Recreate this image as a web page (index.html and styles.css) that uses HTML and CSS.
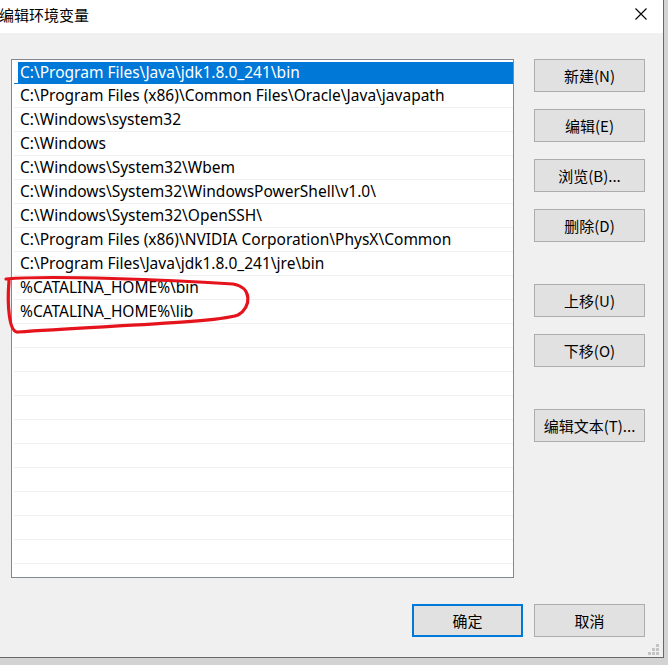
FILE: index.html
```html
<!DOCTYPE html>
<html lang="zh-CN">
<head>
<meta charset="utf-8">
<title>编辑环境变量</title>
<link rel="stylesheet" href="styles.css">
</head>
<body>
<div class="dialog">
  <div class="titlebar">
    <span class="title">编辑环境变量</span>
    <span class="close">
      <svg width="12" height="12" viewBox="0 0 12 12"><path d="M0.5 0.5 L11.5 11.5 M11.5 0.5 L0.5 11.5" stroke="#000" stroke-width="1.1" fill="none"/></svg>
    </span>
  </div>
  <div class="body">
    <div class="main">
      <div class="list">
        <div class="row selected"><div class="cell">C:\Program Files\Java\jdk1.8.0_241\bin</div></div>
        <div class="row"><div class="cell">C:\Program Files (x86)\Common Files\Oracle\Java\javapath</div></div>
        <div class="row"><div class="cell">C:\Windows\system32</div></div>
        <div class="row"><div class="cell">C:\Windows</div></div>
        <div class="row"><div class="cell">C:\Windows\System32\Wbem</div></div>
        <div class="row"><div class="cell">C:\Windows\System32\WindowsPowerShell\v1.0\</div></div>
        <div class="row"><div class="cell">C:\Windows\System32\OpenSSH\</div></div>
        <div class="row"><div class="cell">C:\Program Files (x86)\NVIDIA Corporation\PhysX\Common</div></div>
        <div class="row"><div class="cell">C:\Program Files\Java\jdk1.8.0_241\jre\bin</div></div>
        <div class="row"><div class="cell">%CATALINA_HOME%\bin</div></div>
        <div class="row"><div class="cell">%CATALINA_HOME%\lib</div></div>
        <div class="row"><div class="cell"></div></div>
        <div class="row"><div class="cell"></div></div>
        <div class="row"><div class="cell"></div></div>
        <div class="row"><div class="cell"></div></div>
        <div class="row"><div class="cell"></div></div>
        <div class="row"><div class="cell"></div></div>
        <div class="row"><div class="cell"></div></div>
        <div class="row"><div class="cell"></div></div>
        <div class="row"><div class="cell"></div></div>
        <div class="row"><div class="cell"></div></div>
        <div class="row"><div class="cell"></div></div>
      </div>
      <div class="side">
        <button class="btn">新建(N)</button>
        <button class="btn gap-s">编辑(E)</button>
        <button class="btn gap-s">浏览(B)...</button>
        <button class="btn gap-s">删除(D)</button>
        <button class="btn gap-l">上移(U)</button>
        <button class="btn gap-s">下移(O)</button>
        <button class="btn gap-l">编辑文本(T)...</button>
      </div>
    </div>
    <div class="footer">
      <button class="btn default">确定</button>
      <button class="btn">取消</button>
    </div>
    <svg class="grip" width="12" height="12" viewBox="0 0 12 12">
      <rect x="8" y="0" width="3" height="3" fill="#c4c4c4"/>
      <rect x="4" y="4" width="3" height="3" fill="#c4c4c4"/>
      <rect x="8" y="4" width="3" height="3" fill="#c4c4c4"/>
      <rect x="0" y="8" width="3" height="3" fill="#c4c4c4"/>
      <rect x="4" y="8" width="3" height="3" fill="#c4c4c4"/>
      <rect x="8" y="8" width="3" height="3" fill="#c4c4c4"/>
    </svg>
  </div>
  <svg class="mark" width="260" height="70" viewBox="0 270 260 70">
    <path d="M6 279 C 50 275, 170 280, 233 284 C 252 287, 252 307, 238 315 C 215 323, 100 326, 18 332 C 9 333, 7 305, 9 281" fill="none" stroke="#e5131b" stroke-width="3.2" stroke-linecap="round" stroke-linejoin="round"/>
  </svg>
</div>
</body>
</html>
```

FILE: styles.css
```css
html, body {
  margin: 0;
  padding: 0;
}
body {
  background: #d3d3d3;
  width: 668px;
  height: 665px;
  overflow: hidden;
  font-family: "Noto Sans", "Noto Sans CJK SC", sans-serif;
  font-size: 15px;
  color: #000;
}
.dialog {
  position: relative;
  width: 663px;
  height: 657px;
  border-right: 1px solid #686868;
  border-bottom: 1px solid #686868;
  background: #f0f0f0;
  display: flex;
  flex-direction: column;
}
.titlebar {
  height: 33px;
  background: #fff;
  display: flex;
  align-items: flex-start;
  justify-content: space-between;
  flex: none;
}
.title {
  font-family: "Noto Sans CJK SC", sans-serif;
  font-size: 15px;
  line-height: 20px;
  margin-top: 5px;
  margin-left: -1px;
}
.close {
  width: 12px;
  height: 12px;
  margin-top: 8px;
  margin-right: 16px;
  display: block;
}
.close svg { display: block; }
.body {
  position: relative;
  flex: 1;
  display: flex;
  flex-direction: column;
  padding: 26px 18px 20px 11px;
}
.main {
  display: flex;
  gap: 20px;
}
.list {
  width: 504px;
  height: 519px;
  box-sizing: border-box;
  border: 1px solid #828790;
  background: #fff;
  overflow: hidden;
  padding-left: 1px;
}
.row {
  height: 24px;
  box-sizing: border-box;
  border-bottom: 1px solid #f0f0f0;
  margin-left: 1px;
}
.cell {
  height: 23px;
  line-height: 22px;
  margin-left: 4px;
  padding-left: 2px;
  white-space: nowrap;
  font-size: 15.5px;
}
.row.selected {
  border-bottom-color: #0078d7;
  padding-top: 2px;
}
.row.selected .cell {
  height: 21px;
  line-height: 20px;
  background: #0078d7;
  color: #fff;
}
.side {
  display: flex;
  flex-direction: column;
}
.btn {
  width: 111px;
  height: 33px;
  box-sizing: border-box;
  border: 1px solid #adadad;
  background: #e1e1e1;
  font-family: "Noto Sans CJK SC", sans-serif;
  font-size: 15px;
  color: #000;
  padding: 0;
  margin: 0;
}
.gap-s { margin-top: 17px; }
.gap-l { margin-top: 42px; }
.btn.default {
  border: 2px solid #0078d7;
}
.footer {
  margin-top: auto;
  display: flex;
  justify-content: flex-end;
  gap: 11px;
}
.grip {
  position: absolute;
  right: 3px;
  bottom: 1px;
}
.mark {
  position: absolute;
  left: 0;
  top: 270px;
}
```
